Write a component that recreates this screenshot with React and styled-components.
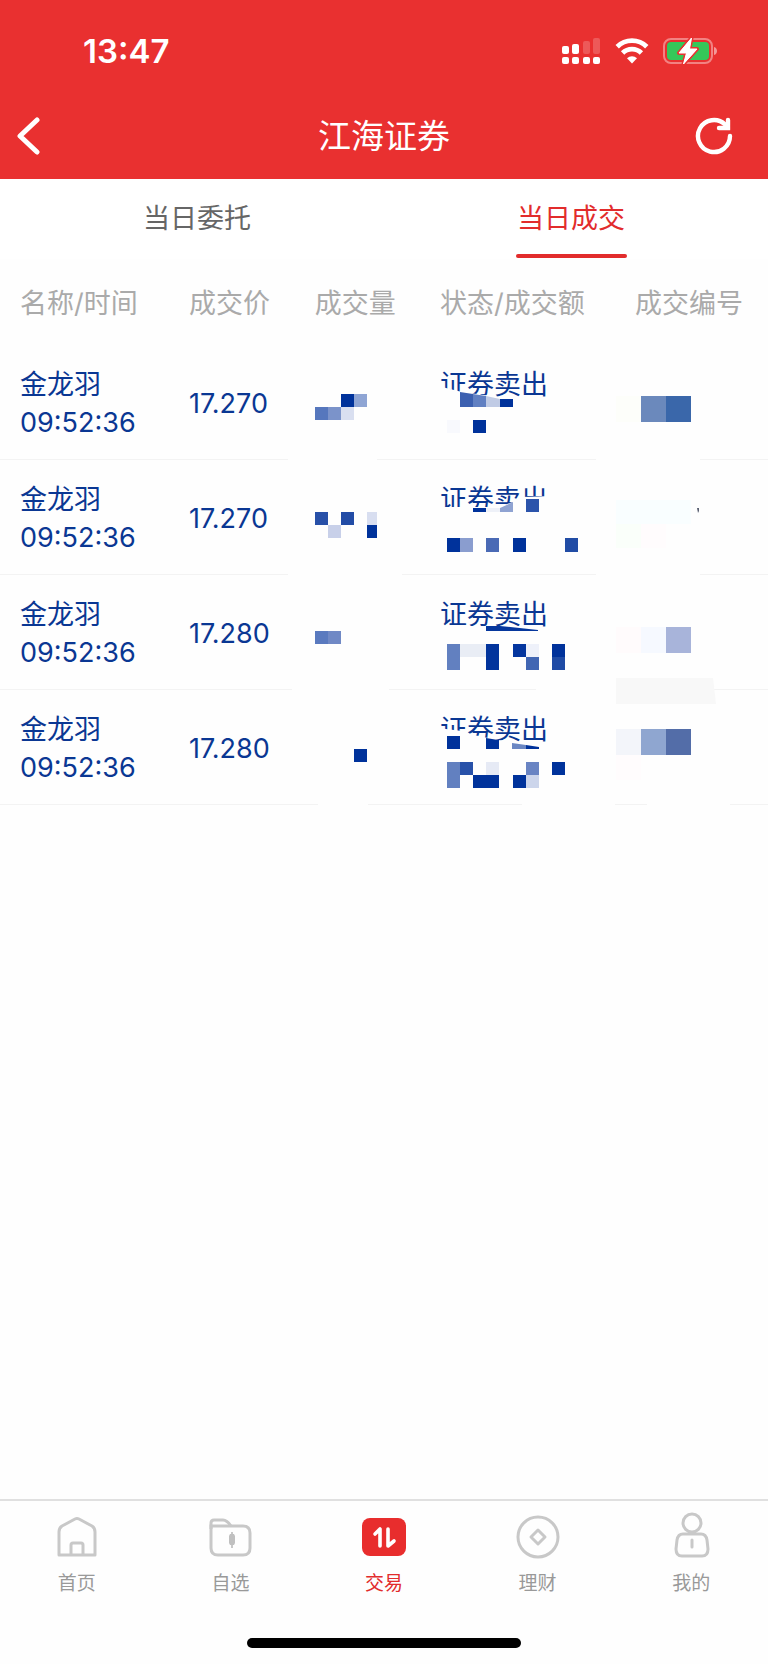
import React from 'react'
import styled, { createGlobalStyle } from 'styled-components'

const NAVY = '#00329b'

const trades = [
  {
    name: '金龙羽',
    time: '09:52:36',
    price: '17.270',
    status: '证券卖出',
    volume: [
      ['#fefefe', -27, 113, 89, 3],
      [NAVY, 26, 49, 13, 13],
      ['#8fa5d4', 39, 49, 13, 13],
      ['#5677bd', 0, 62, 13, 13],
      ['#7b93ca', 13, 62, 13, 13],
      ['#d9dff0', 26, 62, 13, 13],
    ],
    amount: [
      ['#fefefe', '-2,41 22,47 73,54 73,64 -2,64'],
      ['#3c60b0', '20,47 33,49 33,62 20,62'],
      ['#6180c2', '33,49 46,51 46,62 33,62'],
      ['#c0cbe5', '46,51 60,54 60,62 46,62'],
      [NAVY, '60,54 73,54 73,62 60,62'],
      ['#f8f9fd', 7, 75, 13, 13],
      [NAVY, 33, 75, 13, 13],
    ],
    serial: [
      ['#fefefe', -39, 113, 104, 3],
      ['#fdfefa', -19, 51, 25, 26],
      ['#6b89bc', 6, 51, 25, 26],
      ['#3a67aa', 31, 51, 25, 26],
    ],
  },
  {
    name: '金龙羽',
    time: '09:52:36',
    price: '17.270',
    status: '证券卖出',
    volume: [
      ['#fefefe', -27, 113, 114, 3],
      ['#2850a8', 0, 52, 13, 13],
      ['#224ca6', 26, 52, 13, 13],
      ['#d8def0', 52, 52, 10, 13],
      ['#c8d0e9', 13, 65, 13, 13],
      [NAVY, 52, 65, 10, 13],
    ],
    amount: [
      ['#fefefe', '-2,47 58,47 73,42 82,37 112,36 112,60 -2,60'],
      [NAVY, 33, 48, 13, 4],
      ['#eef1f8', 46, 48, 14, 4],
      ['#8fa3d2', '60,48 73,42 73,52 60,52'],
      ['#2c54ab', 86, 39, 13, 13],
      [NAVY, 7, 78, 13, 14],
      ['#8a9dcf', 20, 78, 13, 14],
      ['#4a6ab5', 46, 78, 13, 14],
      [NAVY, 73, 78, 13, 14],
      ['#214ca5', 125, 78, 13, 14],
    ],
    serial: [
      ['#fefefe', -39, 113, 104, 3],
      ['#f9feff', -19, 40, 75, 24],
      ['#fafffa', -19, 64, 25, 24],
      ['#fffcfd', 6, 64, 25, 24],
      ['#5b6072', '62,48 64,48 64,51 63,53'],
    ],
  },
  {
    name: '金龙羽',
    time: '09:52:36',
    price: '17.280',
    status: '证券卖出',
    volume: [
      ['#fefefe', -23, 113, 97, 3],
      ['#5a7abf', 0, 56, 13, 13],
      ['#7089c5', 13, 56, 13, 13],
    ],
    amount: [
      ['#fefefe', -2, 51, 100, 8],
      ['#06379d', '46,51 60,51 98,55 98,56 46,56'],
      ['#6280c0', 7, 69, 13, 26],
      ['#e9edf5', 20, 69, 26, 13],
      ['#02349c', 46, 69, 13, 26],
      ['#04369f', 73, 69, 13, 13],
      ['#eef1fa', 86, 69, 13, 13],
      ['#4166b3', 86, 82, 13, 13],
      [NAVY, 112, 69, 13, 13],
      ['#1f4ba5', 112, 82, 13, 13],
    ],
    serial: [
      ['#fefefe', -99, 113, 80, 3],
      ['#fffbfc', -19, 52, 25, 26],
      ['#f6f9ff', 6, 52, 25, 26],
      ['#a8b4da', 31, 52, 25, 26],
      ['#f8f8f8', '-19,103 78,103 81,129 -19,129'],
    ],
  },
  {
    name: '金龙羽',
    time: '09:52:36',
    price: '17.280',
    status: '证券卖出',
    volume: [
      ['#fefefe', 3, 113, 50, 3],
      [NAVY, 39, 59, 13, 13],
    ],
    amount: [
      ['#fefefe', '-2,38 22,41 34,45 48,48 58,50 74,52 99,54 99,62 -2,62'],
      [NAVY, 7, 46, 13, 13],
      [NAVY, '46,48 58,50 59,50 59,59 46,59'],
      ['#6b87c3', '72,53 86,55 86,59 72,59'],
      [NAVY, '86,55 99,57 99,59 86,59'],
      ['#6280c0', 7, 72, 13, 26],
      ['#2851a9', 20, 72, 13, 13],
      ['#e6eaf5', 46, 72, 13, 13],
      ['#6984c3', 86, 72, 13, 13],
      [NAVY, 112, 72, 13, 13],
      [NAVY, 33, 85, 26, 13],
      [NAVY, 73, 85, 13, 13],
      ['#ccd5eb', 86, 85, 13, 13],
    ],
    serial: [
      ['#fefefe', -113, 113, 93, 3],
      ['#fefefe', 12, 113, 83, 3],
      ['#f3f5fa', -19, 39, 25, 26],
      ['#8fa6d0', 6, 39, 25, 26],
      ['#536da8', 31, 39, 25, 26],
      ['#fffcfd', -19, 65, 25, 25],
    ],
  },
]

// each shape is [color, x, y, width, height] or [color, points]
const Mosaic = ({ shapes }) => (
  <MosaicSvg width="10" height="10" aria-hidden="true">
    {shapes.map(([fill, x, y, w, h], i) =>
      typeof x === 'string' ? (
        <polygon key={i} fill={fill} points={x} />
      ) : (
        <rect key={i} fill={fill} x={x} y={y} width={w} height={h} />
      )
    )}
  </MosaicSvg>
)

const SignalIcon = () => (
  <svg width="40" height="28" viewBox="0 0 40 28" fill="#fff">
    <rect x="1" y="9" width="7" height="8" rx="2" />
    <rect x="11" y="7" width="7" height="10" rx="2" />
    <rect x="22" y="4" width="7" height="13" rx="2" opacity="0.2" />
    <rect x="32" y="1" width="7" height="16" rx="2" opacity="0.2" />
    <rect x="1" y="20" width="7" height="7" rx="2" />
    <rect x="11" y="20" width="7" height="7" rx="2" />
    <rect x="22" y="20" width="7" height="7" rx="2" />
    <rect x="32" y="20" width="7" height="7" rx="2" />
  </svg>
)

const WifiIcon = () => (
  <svg width="34" height="26" viewBox="0 0 34 26" fill="none" stroke="#fff" strokeWidth="4.8">
    <path d="M2.2 8.8a21 21 0 0 1 29.6 0" />
    <path d="M7.6 15a13.4 13.4 0 0 1 18.8 0" />
    <path d="M17 25.500l-5-5.2a7.2 7.2 0 0 1 10 0z" fill="#fff" stroke="none" />
  </svg>
)

const BatteryIcon = () => (
  <svg width="56" height="28" viewBox="0 0 56 28">
    <rect x="1" y="2" width="48" height="24" rx="7" fill="none" stroke="#fff" strokeOpacity="0.4" strokeWidth="2" />
    <path d="M51 10c4 1 4 7 0 8z" fill="#fff" fillOpacity="0.5" />
    <rect x="4" y="5" width="42" height="18" rx="4" fill="#35c759" />
    <path
      d="M28.500 1L16 16h7.500L20.500 27 34 12h-7.500z"
      fill="#fff"
      stroke="#e93030"
      strokeWidth="4"
      strokeLinejoin="round"
      paintOrder="stroke"
    />
    <path d="M28.500 1L16 16h7.500L20.500 27 34 12h-7.500z" fill="#fff" stroke="#fff" strokeWidth="1" strokeLinejoin="round" />
  </svg>
)

const BackIcon = () => (
  <svg width="24" height="40" viewBox="0 0 24 40" fill="none" stroke="#fff" strokeWidth="5" strokeLinecap="round" strokeLinejoin="round">
    <path d="M21 4L4 20l17 16" />
  </svg>
)

const RefreshIcon = () => (
  <svg width="38" height="38" viewBox="0 0 38 38" fill="none" stroke="#fff" strokeWidth="4.4" strokeLinecap="round">
    <path d="M35 19a16 16 0 1 1-5-11.600l2.500 2.500" />
    <path d="M33 3v8h-9" />
  </svg>
)

const HomeIcon = () => (
  <svg width="44" height="44" viewBox="0 0 44 44" fill="none" stroke="#c8c8c8" strokeWidth="3" strokeLinejoin="round">
    <path d="M4 40V17q0-4 3-6L20 4q2-1 4 0l13 7q3 2 3 6v23z" />
    <path d="M16 40V30q0-2 2-2h8q2 0 2 2v10" />
  </svg>
)

const FolderIcon = () => (
  <svg width="44" height="44" viewBox="0 0 44 44" fill="none" stroke="#c8c8c8" strokeWidth="3">
    <path d="M3 11v22q0 7 7 7h25q7 0 7-7V18q0-7-7-7z" />
    <path d="M3 14V8q0-3 3-3h9q4 0 8 6" />
    <path d="M24 17v16" strokeWidth="2" />
    <path d="M22 19h4l1 2v7l-1 2h-4l-1-2v-7z" fill="#c0c0c0" stroke="none" />
  </svg>
)

const TradeIcon = () => (
  <svg width="44" height="44" viewBox="0 0 44 44" fill="none" stroke="#fff" strokeWidth="3.6" strokeLinecap="round" strokeLinejoin="round">
    <rect x="0" y="3" width="44" height="38" rx="8" fill="#e82d2d" stroke="none" />
    <path d="M13 19l5-5v17" />
    <path d="M26 14v17l6-5" />
  </svg>
)

const CoinIcon = () => (
  <svg width="44" height="44" viewBox="0 0 44 44" fill="none" stroke="#c8c8c8" strokeWidth="3" strokeLinejoin="round">
    <circle cx="22" cy="22" r="20" />
    <path d="M22 15l7 7-7 7-7-7z" />
  </svg>
)

const UserIcon = () => (
  <svg width="44" height="44" viewBox="0 0 44 44" fill="none" stroke="#c8c8c8" strokeWidth="3" strokeLinecap="round">
    <circle cx="23" cy="8" r="9" />
    <path d="M14 19h18q5 0 6 6l1 9q0 7-6 7H13q-6 0-6-7l1-9q1-6 6-6z" />
    <path d="M23 25v7" />
  </svg>
)

const navItems = [
  { label: '首页', Icon: HomeIcon },
  { label: '自选', Icon: FolderIcon },
  { label: '交易', Icon: TradeIcon, active: true },
  { label: '理财', Icon: CoinIcon },
  { label: '我的', Icon: UserIcon },
]

const App = () => {
  return (
    <Page>
      <GlobalStyle />
      <Header>
        <StatusBar>
          <Clock>13:47</Clock>
          <StatusIcons>
            <SignalIcon />
            <WifiIcon />
            <BatteryIcon />
          </StatusIcons>
        </StatusBar>
        <TitleBar>
          <IconButton aria-label="返回"><BackIcon /></IconButton>
          <Title>江海证券</Title>
          <IconButton aria-label="刷新"><RefreshIcon /></IconButton>
        </TitleBar>
      </Header>
      <Tabs>
        <Tab>当日委托</Tab>
        <Tab $active>当日成交</Tab>
      </Tabs>
      <Main>
        <Table>
          <thead>
            <tr>
              <Th $width="24.6%">名称/时间</Th>
              <Th $width="16.4%">成交价</Th>
              <Th $width="16.3%">成交量</Th>
              <Th $width="25.4%">状态/成交额</Th>
              <Th>成交编号</Th>
            </tr>
          </thead>
          <tbody>
            {trades.map((t, i) => (
              <Row key={i}>
                <Td>{t.name}<br />{t.time}</Td>
                <Td>{t.price}</Td>
                <Td><Mosaic shapes={t.volume} /></Td>
                <Td>{t.status}<br />&nbsp;<Mosaic shapes={t.amount} /></Td>
                <Td><Mosaic shapes={t.serial} /></Td>
              </Row>
            ))}
          </tbody>
        </Table>
      </Main>
      <Footer>
        <Nav>
          {navItems.map(({ label, Icon, active }) => (
            <NavLink key={label} href="#" $active={active}>
              <Icon />
              {label}
            </NavLink>
          ))}
        </Nav>
        <HomeIndicator />
      </Footer>
    </Page>
  )
}

const GlobalStyle = createGlobalStyle`
  * {
    box-sizing: border-box;
  }
  body {
    margin: 0;
    background: #fefefe;
    font-family: Inter, "Noto Sans CJK SC", sans-serif;
  }
  svg {
    display: block;
  }
`;
const Page = styled.div`
  display: flex;
  flex-direction: column;
  min-height: 100vh;
`;
const Header = styled.header`
  background: #e93030;
  color: #fff;
`;
const StatusBar = styled.div`
  display: flex;
  justify-content: space-between;
  align-items: center;
  height: 102px;
  padding: 0 49px 0 83px;
`;
const Clock = styled.span`
  font-size: 33px;
  font-weight: 600;
`;
const StatusIcons = styled.div`
  display: flex;
  align-items: center;
  gap: 14px;
`;
const TitleBar = styled.div`
  display: grid;
  grid-template-columns: 1fr auto 1fr;
  align-items: center;
  height: 77px;
  padding: 0 35px 9px 16px;
`;
const IconButton = styled.button`
  justify-self: start;
  padding: 0;
  border: 0;
  background: none;
  cursor: pointer;
  &:last-child {
    justify-self: end;
  }
`;
const Title = styled.h1`
  margin: 0;
  padding-left: 19px;
  font-size: 33px;
  font-weight: 400;
  line-height: 40px;
`;
const Tabs = styled.div`
  display: flex;
  padding: 0 10px;
  background: #fff;
`;
const Tab = styled.button`
  display: flex;
  flex: 1;
  flex-direction: column;
  align-items: center;
  gap: 15px;
  height: 80px;
  padding: 20px 0 0;
  border: 0;
  background: none;
  font-family: inherit;
  font-size: 27px;
  line-height: 40px;
  color: ${(p) => (p.$active ? '#e22c2c' : '#666')};
  cursor: pointer;
  &::after {
    content: '';
    width: 111px;
    height: 4px;
    border-radius: 2px;
    background: ${(p) => (p.$active ? '#e22c2c' : 'transparent')};
  }
`;
const Main = styled.main`
  flex: 1;
`;
const Table = styled.table`
  width: 100%;
  table-layout: fixed;
  border-spacing: 0;
  font-size: 27px;
  line-height: 38px;
`;
const Th = styled.th`
  width: ${(p) => p.$width || 'auto'};
  height: 86px;
  padding: 3px 0 0;
  text-align: left;
  font-weight: 400;
  color: #aaa;
  white-space: nowrap;
  &:first-child {
    padding-left: 20px;
  }
`;
const Row = styled.tr`
  color: #0a3793;
`;
const Td = styled.td`
  position: relative;
  height: 115px;
  padding: 3px 0 0;
  border-bottom: 1px solid #f3f3f3;
  &:first-child {
    padding-left: 20px;
  }
`;
const MosaicSvg = styled.svg`
  position: absolute;
  top: 0;
  left: 0;
  overflow: visible;
`;
const Footer = styled.footer`
  border-top: 2px solid #e0e0e0;
`;
const Nav = styled.nav`
  display: flex;
  padding: 14px 0 0;
`;
const NavLink = styled.a`
  display: flex;
  flex: 1;
  flex-direction: column;
  align-items: center;
  gap: 11px;
  font-size: 19px;
  line-height: 28px;
  text-decoration: none;
  color: ${(p) => (p.$active ? '#e22c2c' : '#999')};
  svg {
    overflow: visible;
  }
`;
const HomeIndicator = styled.div`
  width: 274px;
  height: 10px;
  margin: 40px auto 16px;
  border-radius: 5px;
  background: #000;
`;

export default App
